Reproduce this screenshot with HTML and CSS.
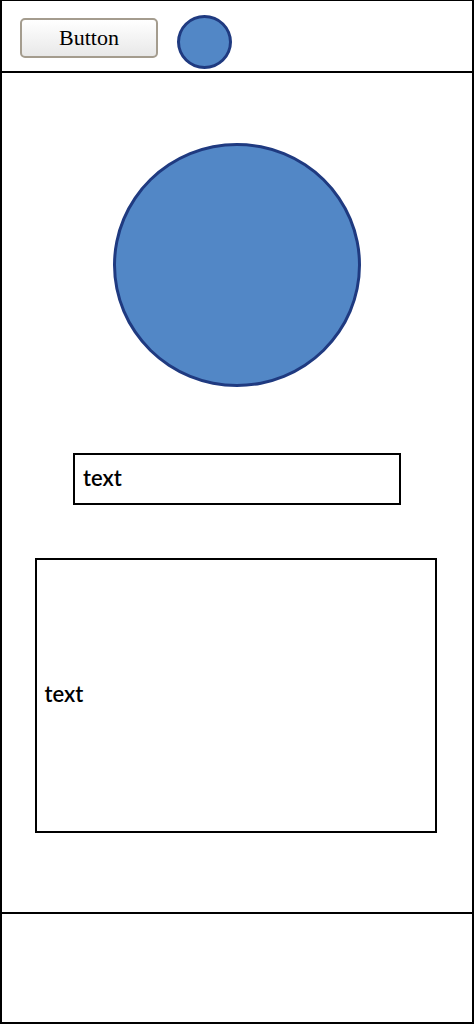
FILE: index.html
```html
<!DOCTYPE html>
<html lang="en">
<head>
    <meta charset="UTF-8">
    <meta name="viewport" content="width=device-width, initial-scale=1.0">
    <title>Mockup</title>
    <link rel="stylesheet" href="styles.css">
</head>
<body>
    <div class="frame">
        <div class="header">
            <button class="btn">Button</button>
            <div class="dot small"></div>
        </div>
        <div class="main">
            <div class="dot big"></div>
            <div class="field">text</div>
            <div class="area">text</div>
        </div>
        <div class="footer"></div>
    </div>
</body>
</html>
```

FILE: styles.css
```css
body {
    margin: 0;
    background: #fff;
}
.frame {
    width: 474px;
    height: 1024px;
    box-sizing: border-box;
    border: 2px solid #000;
    border-top-width: 1px;
    display: flex;
    flex-direction: column;
}
.header {
    height: 72px;
    flex-shrink: 0;
    border-bottom: 2px solid #000;
    display: flex;
    align-items: flex-start;
    gap: 19px;
    padding-left: 18px;
    box-sizing: border-box;
}
.btn {
    width: 138px;
    height: 40px;
    margin-top: 17px;
    border: 2px solid #a49c8e;
    border-radius: 5px;
    background: linear-gradient(to bottom, #ffffff, #e8e8e8);
    font-family: "Liberation Serif", serif;
    font-size: 22px;
    color: #000;
    padding: 0;
}
.dot {
    background: #5287c6;
    border: 3px solid #1f3a80;
    border-radius: 50%;
    box-sizing: border-box;
}
.small {
    width: 55px;
    height: 54px;
    margin-top: 14px;
}
.main {
    flex: 1;
    display: flex;
    flex-direction: column;
    align-items: center;
}
.big {
    width: 248px;
    height: 244px;
    margin-top: 70px;
}
.field {
    margin-top: 66px;
    width: 328px;
    height: 52px;
    box-sizing: border-box;
    border: 2px solid #000;
    padding: 0 8px 4px;
    font-family: "Comic Sans MS", "Lato", sans-serif;
    font-size: 22px;
    font-weight: 600;
    display: flex;
    align-items: center;
}
.area {
    margin-top: 53px;
    width: 402px;
    height: 275px;
    box-sizing: border-box;
    border: 2px solid #000;
    padding: 0 8px 4px;
    font-family: "Comic Sans MS", "Lato", sans-serif;
    font-size: 22px;
    font-weight: 600;
    display: flex;
    align-items: center;
    margin-left: -3px;
}
.footer {
    height: 108px;
    flex-shrink: 0;
    border-top: 2px solid #000;
}
```
